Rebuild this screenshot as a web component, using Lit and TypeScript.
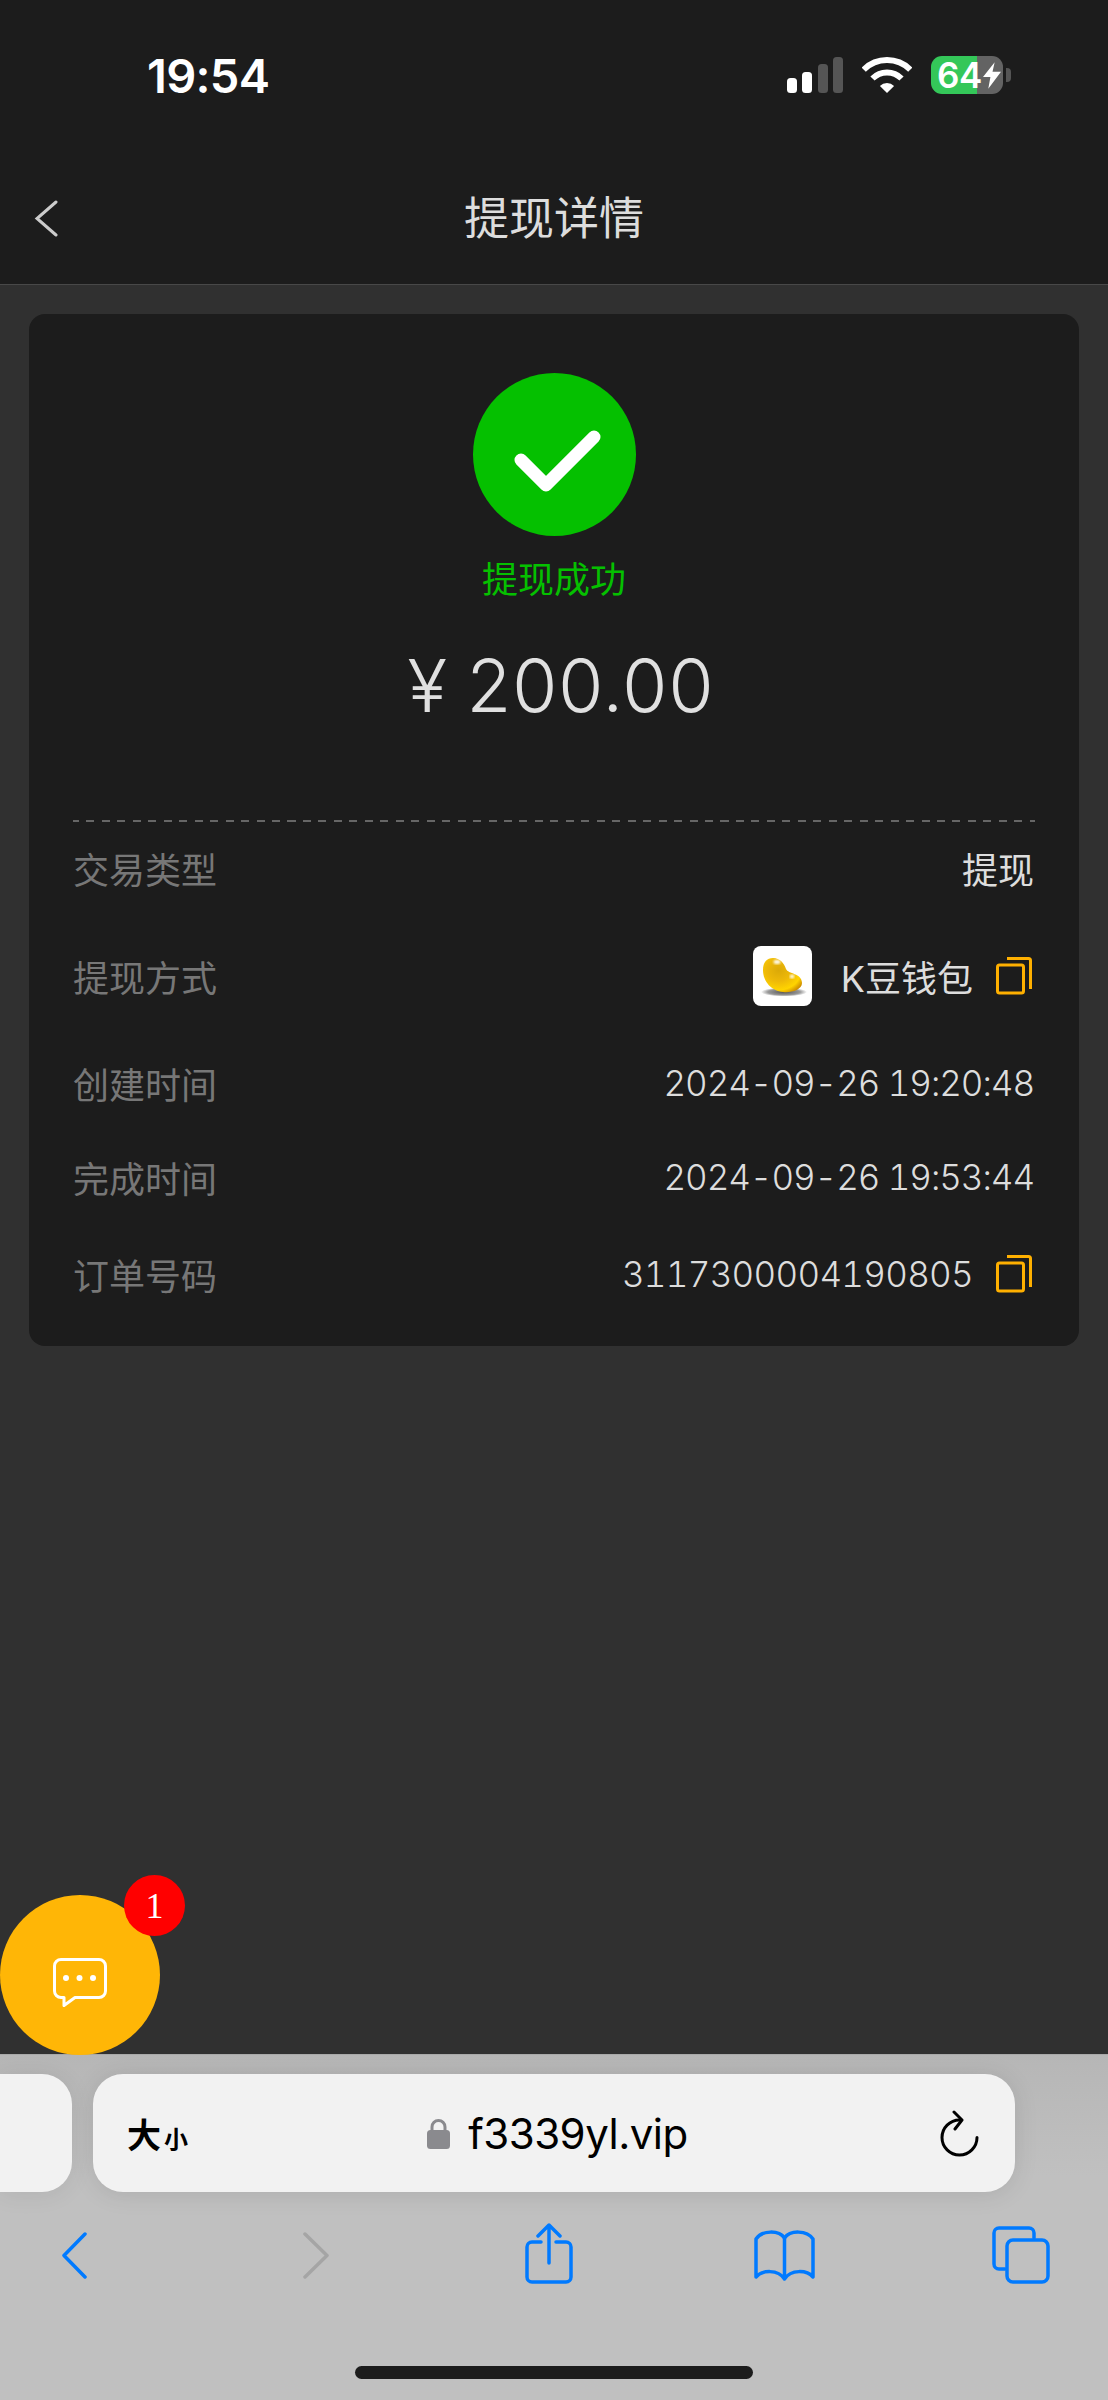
import { LitElement, html, css } from "lit";
import { customElement } from "lit/decorators.js";

const copyIcon = html`<svg class="copy" width="36" height="38" viewBox="0 0 36 38" fill="none" stroke="#ffb000" stroke-width="3"><rect x="1.500" y="8" width="26" height="28" rx="2"/><path d="M11 1.500H32.500a2 2 0 0 1 2 2V32"/></svg>`;

const bean = html`<svg class="bean" width="59" height="60" viewBox="0 0 59 60">
  <defs>
    <radialGradient id="bg" cx=".4" cy=".36" r=".72"><stop offset="0" stop-color="#dba908"/><stop offset=".45" stop-color="#eeb908"/><stop offset=".8" stop-color="#ffd400"/><stop offset="1" stop-color="#d09000"/></radialGradient>
    <radialGradient id="sh"><stop offset="0" stop-color="#555"/><stop offset=".7" stop-color="#999"/><stop offset="1" stop-color="#fff"/></radialGradient>
    <filter id="bl"><feGaussianBlur stdDeviation=".9"/></filter>
  </defs>
  <rect width="59" height="60" rx="8" fill="#fff"/>
  <ellipse cx="31" cy="46" rx="23" ry="4.500" fill="url(#sh)"/>
  <path d="M20 12C27 12 31 17 33 23C35 28 49 27 49 37C49 44 38 47 30 46C19 45 10 36 10 24C10 16 14 12 20 12Z" fill="url(#bg)"/>
  <ellipse cx="24" cy="16" rx="3.500" ry="2.200" fill="#fff" opacity=".9" filter="url(#bl)"/>
  <ellipse cx="39" cy="30.500" rx="2.400" ry="2" fill="#fff" opacity=".9" filter="url(#bl)"/>
</svg>`;

@customElement("app-root")
export class AppRoot extends LitElement {
  static styles = css`
    :host { display: block; width: 1108px; height: 2400px; position: relative; overflow: hidden; background: #303030; font-family: Inter, "Noto Sans CJK SC", sans-serif; }
    .page { display: flex; flex-direction: column; height: 2400px; }
    header { background: #1c1c1c; border-bottom: 1px solid #484848; height: 285px; box-sizing: border-box; flex: none; }
    .status { height: 150px; display: flex; align-items: center; padding: 0 97px 0 147px; box-sizing: border-box; }
    .time { color: #fff; font-size: 47px; font-weight: 600; letter-spacing: -0.7px; margin-right: auto; }
    .signal { margin: 0 19px 0 0; }
    .wifi { margin-right: 19px; }
    .battery { width: 72px; height: 38px; border-radius: 11px; background: linear-gradient(90deg, #34c759 46px, #636363 46px); display: flex; align-items: center; padding-left: 6px; box-sizing: border-box; color: #fff; font-size: 35px; font-weight: 600; letter-spacing: -.5px; }
    .battery svg { margin-left: 1px; flex: none; }
    .nub { width: 5px; height: 14px; margin-left: 3px; background: #555; border-radius: 0 4px 4px 0; }
    .nav { height: 134px; display: flex; align-items: center; justify-content: center; position: relative; }
    .nav .back { position: absolute; left: 34px; top: 50px; }
    .nav h1 { margin: 2px 0 0; color: #ddd; font-size: 45px; font-weight: 400; line-height: 1; }
    main { flex: 1; padding: 29px 29px 0; box-sizing: border-box; }
    .card { background: #1c1c1c; border-radius: 16px; padding: 59px 44px 0; height: 1032px; box-sizing: border-box; }
    .hero { display: flex; flex-direction: column; align-items: center; height: 449px; box-sizing: border-box; border-bottom: 2px dashed #666; border-image: repeating-linear-gradient(90deg, #666 0 8px, transparent 8px 15.4px) 2; }
    .ok { width: 163px; height: 163px; display: block; }
    .state { color: #05c000; font-size: 36px; line-height: 1; margin-top: 26px; }
    .amount { color: #e0e0e0; font-size: 73px; font-weight: 350; line-height: 1; margin: 51px 0 0 14px; letter-spacing: 1px; word-spacing: -3px; }
    .rows { display: grid; grid-template-rows: 92px 124px 90px 98px 96px; padding-right: 1px; }
    .row { display: flex; align-items: center; justify-content: flex-end; font-size: 36px; color: #ddd; }
    .row .label { color: #777; margin-right: auto; }
    .num { font-size: 35px; letter-spacing: -.7px; font-weight: 350; font-variant-numeric: tabular-nums; }
    .date { letter-spacing: -1.05px; }
    .bean { margin-right: 29px; }
    .copy { margin-left: 23px; margin-right: 2px; flex: none; }
    .bar { flex: none; height: 346px; background: linear-gradient(#b6b6b6, #c0c0c0 35%); border-top: 1px solid #a8a8a8; box-sizing: border-box; padding-top: 19px; }
    .urls { display: flex; gap: 21px; height: 118px; }
    .tab { width: 72px; background: #f2f2f2; border-radius: 0 30px 30px 0; box-shadow: 0 2px 24px rgba(0,0,0,.08); }
    .pill { width: 922px; background: #f2f2f2; border-radius: 30px; box-shadow: 0 2px 24px rgba(0,0,0,.1); display: grid; grid-template-columns: 1fr auto 1fr; align-items: center; padding: 0 36px 0 34px; box-sizing: border-box; color: #000; }
    .aa { font-weight: 700; font-size: 34px; display: flex; align-items: baseline; font-family: "Noto Sans CJK SC", sans-serif; }
    .aa small { font-size: 24px; margin-left: 3px; }
    .host { display: flex; align-items: center; gap: 18px; font-size: 42px; letter-spacing: -.5px; margin-left: 9px; }
    .reload { justify-self: end; }
    .tools { display: flex; align-items: center; height: 64px; margin-top: 31px; padding-left: 61px; }
    .tools svg { flex: none; display: block; }
    .t2 { margin-left: 216px; }
    .t3 { margin-left: 195px; margin-bottom: 3px; }
    .t4 { margin-left: 181px; }
    .t5 { margin-left: 177px; }
    .home { width: 398px; height: 13px; border-radius: 7px; background: #1c1c1c; margin: 79px auto 0; }
    .chat { position: absolute; left: 0; top: 1895px; width: 160px; height: 160px; border-radius: 50%; background: #ffb606; display: flex; align-items: center; justify-content: center; }
    .chat svg { margin: 14px 0 0 -1px; }
    .badge { position: absolute; left: 124px; top: 1875px; width: 61px; height: 61px; border-radius: 50%; background: #f00; color: #fff; font-family: "Liberation Serif", serif; font-size: 36px; display: flex; align-items: center; justify-content: center; }
  `;

  render() {
    return html`
      <div class="page">
        <header>
          <div class="status">
            <span class="time">19:54</span>
            <svg class="signal" width="56" height="36" viewBox="0 0 56 36">
              <rect x="0" y="21" width="10" height="15" rx="3.500" fill="#fff"/>
              <rect x="15" y="15" width="10" height="21" rx="3.500" fill="#fff"/>
              <rect x="31" y="7" width="10" height="29" rx="3.500" fill="#555"/>
              <rect x="46" y="0" width="10" height="36" rx="3.500" fill="#555"/>
            </svg>
            <svg class="wifi" width="50" height="36" viewBox="0 0 50 36" fill="none" stroke="#fff" stroke-width="6">
              <path d="M1.700 12.700A33 33 0 0 1 48.300 12.700"/>
              <path d="M10.500 21.500A20.500 20.500 0 0 1 39.500 21.500"/>
              <path d="M25 36L17.900 28.900A10 10 0 0 1 32.100 28.900Z" fill="#fff" stroke="none"/>
            </svg>
            <div class="battery">64<svg width="18" height="27" viewBox="0 0 17 25"><path d="M11 0L0 14H7L5 25L17 9H9Z" fill="#fff"/></svg></div>
            <div class="nub"></div>
          </div>
          <div class="nav">
            <svg class="back" width="24" height="37" viewBox="0 0 24 37" fill="none" stroke="#ccc" stroke-width="3" stroke-linecap="round"><path d="M22 2L3 18.500L22 35"/></svg>
            <h1>提现详情</h1>
          </div>
        </header>
        <main>
          <section class="card">
            <div class="hero">
              <svg class="ok" viewBox="0 0 163 163"><circle cx="81.500" cy="81.500" r="81.500" fill="#05c000"/><path d="M48 87L73 112L121 64" fill="none" stroke="#fff" stroke-width="13" stroke-linecap="round" stroke-linejoin="round"/></svg>
              <div class="state">提现成功</div>
              <div class="amount">¥ 200.00</div>
            </div>
            <div class="rows">
              <div class="row"><span class="label">交易类型</span><span>提现</span></div>
              <div class="row"><span class="label">提现方式</span>${bean}<span>K豆钱包</span>${copyIcon}</div>
              <div class="row"><span class="label">创建时间</span><span class="num date">2024-09-26 19:20:48</span></div>
              <div class="row"><span class="label">完成时间</span><span class="num date">2024-09-26 19:53:44</span></div>
              <div class="row"><span class="label">订单号码</span><span class="num">3117300004190805</span>${copyIcon}</div>
            </div>
          </section>
        </main>
        <footer class="bar">
          <div class="urls">
            <div class="tab"></div>
            <div class="pill">
              <div class="aa">大<small>小</small></div>
              <div class="host">
                <svg width="23" height="32" viewBox="0 0 23 32"><path d="M5 14V10a6.500 6.500 0 0 1 13 0v4" fill="none" stroke="#8a8a8e" stroke-width="3"/><rect y="13" width="23" height="19" rx="3.500" fill="#8a8a8e"/></svg>
                <span>f3339yl.vip</span>
              </div>
              <svg class="reload" width="39" height="47" viewBox="0 0 39 47" fill="none" stroke="#000" stroke-width="3" stroke-linecap="round" stroke-linejoin="round"><path d="M37 27.500A17.500 17.500 0 1 1 19.500 10"/><path d="M14 2L22 10L15 19"/></svg>
            </div>
          </div>
          <div class="tools">
            <svg width="26" height="47" viewBox="0 0 26 47" fill="none" stroke="#007aff" stroke-width="3.500" stroke-linecap="round" stroke-linejoin="round"><path d="M24 2L3 23.500L24 45"/></svg>
            <svg class="t2" width="27" height="47" viewBox="0 0 27 47" fill="none" stroke="#a5a5a5" stroke-width="3.500" stroke-linecap="round" stroke-linejoin="round"><path d="M2 2L24 23.500L2 45"/></svg>
            <svg class="t3" width="48" height="61" viewBox="0 0 48 61" fill="none" stroke="#007aff" stroke-width="3.500" stroke-linecap="round"><path d="M16 19H7A5 5 0 0 0 2 24V54A5 5 0 0 0 7 59H41A5 5 0 0 0 46 54V24A5 5 0 0 0 41 19H31"/><path d="M24 40V2M13 13L24 2L35 13" stroke-linejoin="round"/></svg>
            <svg class="t4" width="61" height="51" viewBox="0 0 61 51" fill="none" stroke="#007aff" stroke-width="3.500" stroke-linecap="round" stroke-linejoin="round"><path d="M30.500 8V48"/><path d="M30.500 8C25 0 8 0 2 9V47C8 40 24 39 30.500 49C37 39 53 40 59 47V9C53 0 36 0 30.500 8Z"/></svg>
            <svg class="t5" width="58" height="58" viewBox="0 0 58 58" fill="none" stroke="#007aff" stroke-width="3.500" stroke-linecap="round"><path d="M42 12V7A5 5 0 0 0 37 2H7A5 5 0 0 0 2 7V38A5 5 0 0 0 7 43H13"/><rect x="15" y="14" width="41" height="42" rx="6"/></svg>
          </div>
          <div class="home"></div>
        </footer>
      </div>
      <div class="chat">
        <svg width="54" height="49" viewBox="0 0 54 49" fill="none" stroke="#fff" stroke-width="3" stroke-linejoin="round"><path d="M8 1.500H46A6.500 6.500 0 0 1 52.500 8V33A6.500 6.500 0 0 1 46 39.500H22L11 47.500V39.500H8A6.500 6.500 0 0 1 1.500 33V8A6.500 6.500 0 0 1 8 1.500Z"/><circle cx="13" cy="20" r="3" fill="#fff" stroke="none"/><circle cx="26.500" cy="20" r="3" fill="#fff" stroke="none"/><circle cx="40" cy="20" r="3" fill="#fff" stroke="none"/></svg>
      </div>
      <div class="badge">1</div>
    `;
  }
}
